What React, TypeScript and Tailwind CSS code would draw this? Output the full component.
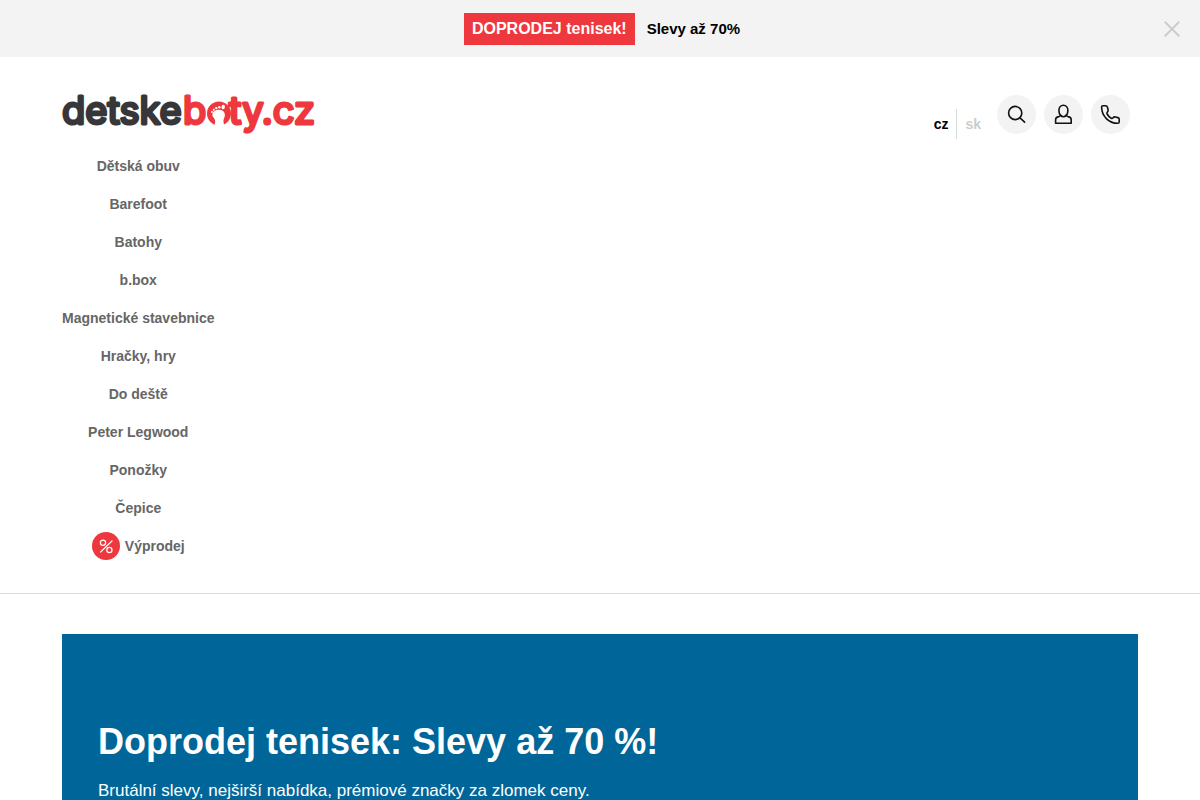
import React from 'react'

const categories = [
  'Dětská obuv',
  'Barefoot',
  'Batohy',
  'b.box',
  'Magnetické stavebnice',
  'Hračky, hry',
  'Do deště',
  'Peter Legwood',
  'Ponožky',
  'Čepice',
]

export default function App() {
  return (
    <div className="min-h-screen bg-white font-['Liberation_Sans',Arial,sans-serif] text-black">
      <PromoBar />
      <Header />
      <main className="px-[62px] pt-10">
        <Hero />
      </main>
    </div>
  )
}

function PromoBar() {
  return (
    <div className="relative flex items-center justify-center bg-[#f3f3f3] pt-[13px] pb-3 pl-1">
      <a href="#tenisky" className="flex items-center gap-3 font-bold">
        <span className="bg-[#ef373e] px-2 py-1 text-base text-white">DOPRODEJ tenisek!</span>
        <span className="text-[15px]">Slevy až 70%</span>
      </a>
      <button type="button" aria-label="Zavřít" className="absolute right-5 top-5 cursor-pointer">
        <svg width="16" height="18" viewBox="0 0 16 18" fill="none" stroke="#ccc" strokeWidth="2">
          <path d="M.7 1.7l14.6 14.6M15.3 1.7L.7 16.3" />
        </svg>
      </button>
    </div>
  )
}

function Header() {
  return (
    <header className="border-b border-[#dcdcdc] px-[62px] pt-[38px] pb-7">
      <div className="flex items-start justify-between pr-2 pb-2">
        <a href="#" aria-label="detskeboty.cz">
          <Logo />
        </a>
        <div className="flex items-start gap-2">
          <div className="mt-3.5 flex text-sm leading-[30px] font-bold">
            <a href="#cz" className="border-r border-[#d8d8d8] px-2">
              cz
            </a>
            <a href="#sk" className="px-2 text-[#ccc]">
              sk
            </a>
          </div>
          <RoundButton label="Hledat">
            <circle cx="18.2" cy="18" r="6.6" />
            <path d="M23 22.800l4.600 4.300" />
          </RoundButton>
          <RoundButton label="Přihlásit se">
            <path d="M16.700 20.500c-1.100-1-1.800-3-1.800-5 0-3 1.800-5.300 4.500-5.300s4.500 2.300 4.500 5.300c0 2-.7 4-1.800 5" />
            <path d="M16.700 20.300c-.4.900-1 1.100-2 1.300-1.900.3-3.100 1.300-3.100 3.200v3.400h15.600v-3.400c0-1.900-1.200-2.900-3.100-3.200-1-.2-1.600-.4-2-1.300-1.300 2-4.100 2-5.400 0z" />
          </RoundButton>
          <RoundButton label="Zavolat">
            <path d="M12 10.700h2.600c1 0 1.600.5 1.800 1.400l.7 2.700c.2.900 0 1.500-.6 2.100-.7.700-.8 1.300-.4 2.100 1 1.800 2.300 3.200 4.100 4.200.8.400 1.300.3 1.900-.4.600-.8 1.400-1 2.300-.8l2.500.6c.9.200 1.300.8 1.300 1.700V27c0 .8-.6 1.300-1.500 1.300-8.800 0-16.100-7.200-16.100-16.200 0-.9.600-1.400 1.400-1.400z" />
          </RoundButton>
        </div>
      </div>

      <nav className="flex">
        <ul className="text-center text-sm leading-[38px] font-bold text-[#666]">
          {categories.map((name) => (
            <li key={name}>
              <a href="#">{name}</a>
            </li>
          ))}
          <li>
            <a href="#vyprodej" className="flex items-center justify-center gap-[5px]">
              <SaleIcon />
              Výprodej
            </a>
          </li>
        </ul>
      </nav>
    </header>
  )
}

function RoundButton({ label, children }: { label: string; children: React.ReactNode }) {
  return (
    <button type="button" aria-label={label} className="size-[39px] cursor-pointer rounded-full bg-[#f3f3f3]">
      <svg
        viewBox="0 0 39 39"
        className="block size-full"
        fill="none"
        stroke="#111"
        strokeWidth="1.6"
        strokeLinecap="round"
        strokeLinejoin="round"
      >
        {children}
      </svg>
    </button>
  )
}

function SaleIcon() {
  return (
    <svg width="28" height="28" viewBox="0 0 28 28" fill="none" stroke="#fff" strokeWidth="1.2" strokeLinecap="round">
      <circle cx="14" cy="14" r="14" fill="#ef373e" stroke="none" />
      <circle cx="11" cy="10.800" r="2.600" />
      <circle cx="17.400" cy="18" r="2.600" />
      <path d="M20 9L8.600 20" />
    </svg>
  )
}

function Logo() {
  return (
    <svg
      width="252"
      height="40"
      viewBox="0 0 252 40"
      className="block overflow-visible font-['Inter',sans-serif] text-[38px] font-normal"
      strokeWidth="3"
      strokeLinejoin="round"
    >
      <text x="0" y="29" fill="#373739" stroke="#373739">
        detske
      </text>
      <g fill="#ef373e" stroke="#ef373e">
        <text x="121" y="29">
          b
        </text>
        <text x="167" y="29">
          ty.cz
        </text>
      </g>
      {/* footprint in place of the letter o */}
      <circle cx="157" cy="18.500" r="12" fill="#ef373e" />
      <path
        d="M151.800 31.200c2-3.500 2-6-.3-8.600-1.800-2.100-1.200-5 1.100-6.500 3.500-2.200 8.500-1.500 9.900 2 1.300 3.500-1.300 5.500-1 8.700.1 1.500.5 2.800 1.200 4.300z"
        fill="#fff"
      />
      <g fill="#fff">
        <ellipse cx="161.200" cy="12" rx="1.700" ry="2.300" transform="rotate(10 161.200 12)" />
        <circle cx="157.300" cy="12.200" r="1.300" />
        <circle cx="154.300" cy="13.100" r="1.200" />
        <circle cx="151.800" cy="14.800" r="1.100" />
        <circle cx="150" cy="17.100" r="1" />
      </g>
    </svg>
  )
}

function Hero() {
  return (
    <section className="bg-[#006699] px-9 pt-[88px] pb-20 text-white">
      <h1 className="text-4xl leading-10 font-bold">Doprodej tenisek: Slevy až 70 %!</h1>
      <p className="mt-4 text-[17px] leading-[26px]">
        Brutální slevy, nejširší nabídka, prémiové značky za zlomek ceny.
      </p>
    </section>
  )
}
